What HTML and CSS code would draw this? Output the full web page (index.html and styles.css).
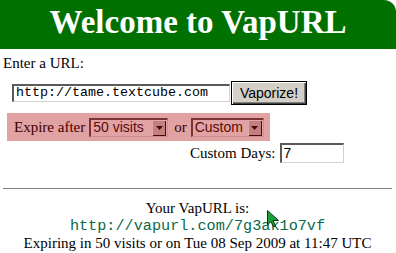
FILE: index.html
```html
<!DOCTYPE html>
<html>
<head>
<meta charset="utf-8">
<link rel="stylesheet" href="styles.css">
</head>
<body>
<div class="header"><h1 class="title">Welcome to VapURL</h1></div>
<div class="content">
  <div class="label">Enter a URL:</div>
  <div class="url-row">
    <div class="textbox url-box">http://tame.textcube.com</div>
    <div class="button">Vaporize!</div>
  </div>
  <div class="expire">
    <span class="expire-text">Expire after</span>
    <div class="select sel-visits"><span class="sel-text">50 visits</span><span class="sel-arrow"><svg width="7" height="4" viewBox="0 0 7 4"><path d="M0 0h7L3.5 4z" fill="#4a0808"/></svg></span></div>
    <span class="or">or</span>
    <div class="select sel-custom"><span class="sel-text">Custom</span><span class="sel-arrow"><svg width="7" height="4" viewBox="0 0 7 4"><path d="M0 0h7L3.5 4z" fill="#4a0808"/></svg></span></div>
  </div>
  <div class="days-row">
    <span class="days-label">Custom Days:</span>
    <div class="textbox days-box">7</div>
  </div>
  <hr class="rule">
  <div class="result">
    <div class="result-line">Your VapURL is:</div>
    <div class="short-url">http://vapurl.com/7g3ak1o7vf</div>
    <div class="result-line">Expiring in 50 visits or on Tue 08 Sep 2009 at 11:47 UTC</div>
    <svg class="cursor" width="13" height="18" viewBox="0 0 13 18"><path d="M0.5 0.5 L0.5 15 L4 11.5 L6.5 17 L8.5 16 L6 10.5 L11.5 10.5 Z" fill="#1aa03a" stroke="#0a3a10" stroke-width="1"/></svg>
  </div>
</div>
</body>
</html>
```
FILE: styles.css
```css
html, body {
  margin: 0;
  padding: 0;
  background: #fff;
}
body {
  font-family: "Liberation Serif", "Times New Roman", serif;
  font-size: 15px;
  color: #000;
  width: 396px;
  height: 253px;
  overflow: hidden;
}
.header {
  background: #007000;
  height: 49px;
  border-top-right-radius: 12px;
  display: flex;
  justify-content: center;
  align-items: flex-start;
}
.title {
  margin: 0;
  padding-top: 2px;
  color: #fff;
  font-size: 33px;
  font-weight: bold;
  line-height: 40px;
}
.content {
  padding: 0 4px 0 3px;
}
.label {
  line-height: 18px;
  margin-top: 5px;
}
.url-row {
  display: flex;
  align-items: center;
  margin-top: 9px;
  padding-left: 9px;
  height: 24px;
}
.textbox {
  box-sizing: border-box;
  background: #fff;
  border-style: solid;
  border-width: 2px 1px 1px 2px;
  border-color: #5a5a5a #d4d0c8 #d4d0c8 #5a5a5a;
  font-family: "Liberation Mono", "Courier New", monospace;
  font-size: 13.33px;
  line-height: 14px;
  color: #000;
  padding: 0 2px;
}
.url-box {
  width: 218px;
  height: 18px;
}
.button {
  box-sizing: border-box;
  margin-left: 1px;
  width: 76px;
  height: 24px;
  border: 1px solid #000;
  background: #d4d0c8;
  box-shadow: inset 1px 1px 0 #fff, inset -1px -1px 0 #404040, inset -2px -2px 0 #808080;
  font-family: "Liberation Sans", Arial, sans-serif;
  font-size: 14px;
  display: flex;
  align-items: center;
  justify-content: center;
  color: #000;
}
.expire {
  display: flex;
  align-items: center;
  margin-top: 8px;
  margin-left: 4px;
  width: 263px;
  height: 28px;
  background: #e0a2a2;
  box-sizing: border-box;
  padding-left: 7px;
  color: #3c0000;
}
.or {
  margin: 0 4px 0 6px;
}
.select {
  box-sizing: border-box;
  height: 19px;
  margin-left: 4px;
  display: flex;
  align-items: stretch;
  border-style: solid;
  border-width: 2px 1px 1px 2px;
  border-color: #7a3434 #c89090 #c89090 #7a3434;
  background: #e0a2a2;
  font-family: "Liberation Sans", Arial, sans-serif;
  font-size: 14px;
  color: #5a0a0a;
}
.sel-visits { width: 79px; }
.sel-custom { width: 73px; margin-left: 0; }
.sel-text {
  flex: 1;
  padding-left: 2px;
  line-height: 15px;
}
.sel-arrow {
  width: 14px;
  margin: 0 1px 0 0;
  background: #c47f7f;
  box-shadow: inset 1px 1px 0 #e0a8a8, inset -1px -1px 0 #4a0808;
  display: flex;
  align-items: center;
  justify-content: center;
}
.days-row {
  display: flex;
  align-items: center;
  margin-top: 2px;
  padding-left: 187px;
  height: 20px;
}
.days-label {
  margin-right: 5px;
}
.days-box {
  width: 64px;
  height: 20px;
  font-family: "Liberation Sans", Arial, sans-serif;
  font-size: 14px;
  line-height: 17px;
  padding-left: 1px;
}
.rule {
  margin: 25px 0 0 0;
  border: 0;
  border-top: 1px solid #808080;
  height: 0;
}
.result {
  position: relative;
  text-align: center;
  margin-top: 11px;
}
.result-line {
  line-height: 17px;
}
.short-url {
  font-family: "Liberation Mono", "Courier New", monospace;
  font-size: 15.2px;
  line-height: 18px;
  color: #0a6a4a;
}
.cursor {
  position: absolute;
  left: 264px;
  top: 10px;
}
```
